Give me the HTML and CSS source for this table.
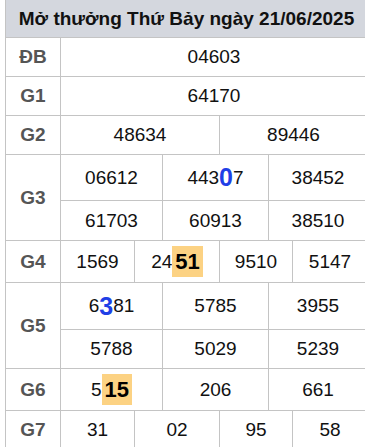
FILE: index.html
```html
<!DOCTYPE html>
<html lang="vi">
<head>
    <meta charset="UTF-8">
    <meta name="viewport" content="width=device-width, initial-scale=1.0">
    <title>Kết quả xổ số</title>
    <link rel="stylesheet" href="styles.css">
</head>
<body>
    <div class="board">
        <div class="board-title">Mở thưởng Thứ Bảy ngày 21/06/2025</div>

        <div class="prize">
            <div class="prize-name">ĐB</div>
            <div class="prize-body">
                <div class="line cols-1"><div class="cell">04603</div></div>
            </div>
        </div>

        <div class="prize">
            <div class="prize-name">G1</div>
            <div class="prize-body">
                <div class="line cols-1"><div class="cell">64170</div></div>
            </div>
        </div>

        <div class="prize">
            <div class="prize-name">G2</div>
            <div class="prize-body">
                <div class="line cols-2">
                    <div class="cell">48634</div>
                    <div class="cell">89446</div>
                </div>
            </div>
        </div>

        <div class="prize">
            <div class="prize-name">G3</div>
            <div class="prize-body">
                <div class="line cols-3 line-45">
                    <div class="cell">06612</div>
                    <div class="cell">443<b class="em">0</b>7</div>
                    <div class="cell">38452</div>
                </div>
                <div class="line cols-3 line-39">
                    <div class="cell">61703</div>
                    <div class="cell">60913</div>
                    <div class="cell">38510</div>
                </div>
            </div>
        </div>

        <div class="prize">
            <div class="prize-name">G4</div>
            <div class="prize-body">
                <div class="line cols-4 line-41">
                    <div class="cell">1569</div>
                    <div class="cell">24<b class="hl">51</b></div>
                    <div class="cell">9510</div>
                    <div class="cell">5147</div>
                </div>
            </div>
        </div>

        <div class="prize">
            <div class="prize-name">G5</div>
            <div class="prize-body">
                <div class="line cols-3 line-46">
                    <div class="cell">6<b class="em">3</b>81</div>
                    <div class="cell">5785</div>
                    <div class="cell">3955</div>
                </div>
                <div class="line cols-3">
                    <div class="cell">5788</div>
                    <div class="cell">5029</div>
                    <div class="cell">5239</div>
                </div>
            </div>
        </div>

        <div class="prize">
            <div class="prize-name">G6</div>
            <div class="prize-body">
                <div class="line cols-3 line-41">
                    <div class="cell">5<b class="hl">15</b></div>
                    <div class="cell">206</div>
                    <div class="cell">661</div>
                </div>
            </div>
        </div>

        <div class="prize">
            <div class="prize-name">G7</div>
            <div class="prize-body">
                <div class="line cols-4">
                    <div class="cell">31</div>
                    <div class="cell">02</div>
                    <div class="cell">95</div>
                    <div class="cell">58</div>
                </div>
            </div>
        </div>
    </div>
</body>
</html>
```

FILE: styles.css
```css
/* Page */
body {
    margin: 0;
    overflow: hidden;
    background: #ffffff;
    font-family: "Liberation Sans", Arial, sans-serif;
    color: #111111;
}

/* Result board */
.board {
    margin-left: 5px;
    width: 361px;
    border-left: 1px solid #c4c4c4;
}

.board-title {
    height: 37px;
    display: flex;
    align-items: center;
    justify-content: center;
    background: #d4d7de;
    border-bottom: 1px solid #c4c4c4;
    font-size: 19px;
    font-weight: bold;
    color: #111111;
    white-space: nowrap;
}

/* One prize row */
.prize {
    display: flex;
    border-bottom: 1px solid #c4c4c4;
}

.prize-name {
    flex: 0 0 55px;
    box-sizing: border-box;
    display: flex;
    align-items: center;
    justify-content: center;
    border-right: 1px solid #c4c4c4;
    font-size: 19px;
    font-weight: bold;
    color: #555555;
}

.prize-body {
    flex: 1;
    display: flex;
    flex-direction: column;
}

/* Lines of numbers */
.line {
    display: grid;
    height: 38px;
}

.line + .line {
    border-top: 1px solid #c4c4c4;
}

.line-39 { height: 39px; }
.line-41 { height: 41px; }
.line-45 { height: 45px; }
.line-46 { height: 46px; }

.cols-1 { grid-template-columns: 1fr; }
.cols-2 { grid-template-columns: 159px 1fr; }
.cols-3 { grid-template-columns: 102px 106px 1fr; }
.cols-4 { grid-template-columns: 74px 85px 73px 1fr; }

.cell {
    display: flex;
    align-items: center;
    justify-content: center;
    border-right: 1px solid #c4c4c4;
    font-size: 19px;
    white-space: nowrap;
}

.cell:last-child {
    border-right: none;
}

.cell:not(:last-child) {
    box-sizing: border-box;
}

/* Special digits */
.em {
    color: #1f3fe6;
    font-size: 25px;
}

.hl {
    display: inline-block;
    padding: 0 3px;
    line-height: 31px;
    font-size: 22px;
    background: #fcd283;
    color: #000000;
}
```
